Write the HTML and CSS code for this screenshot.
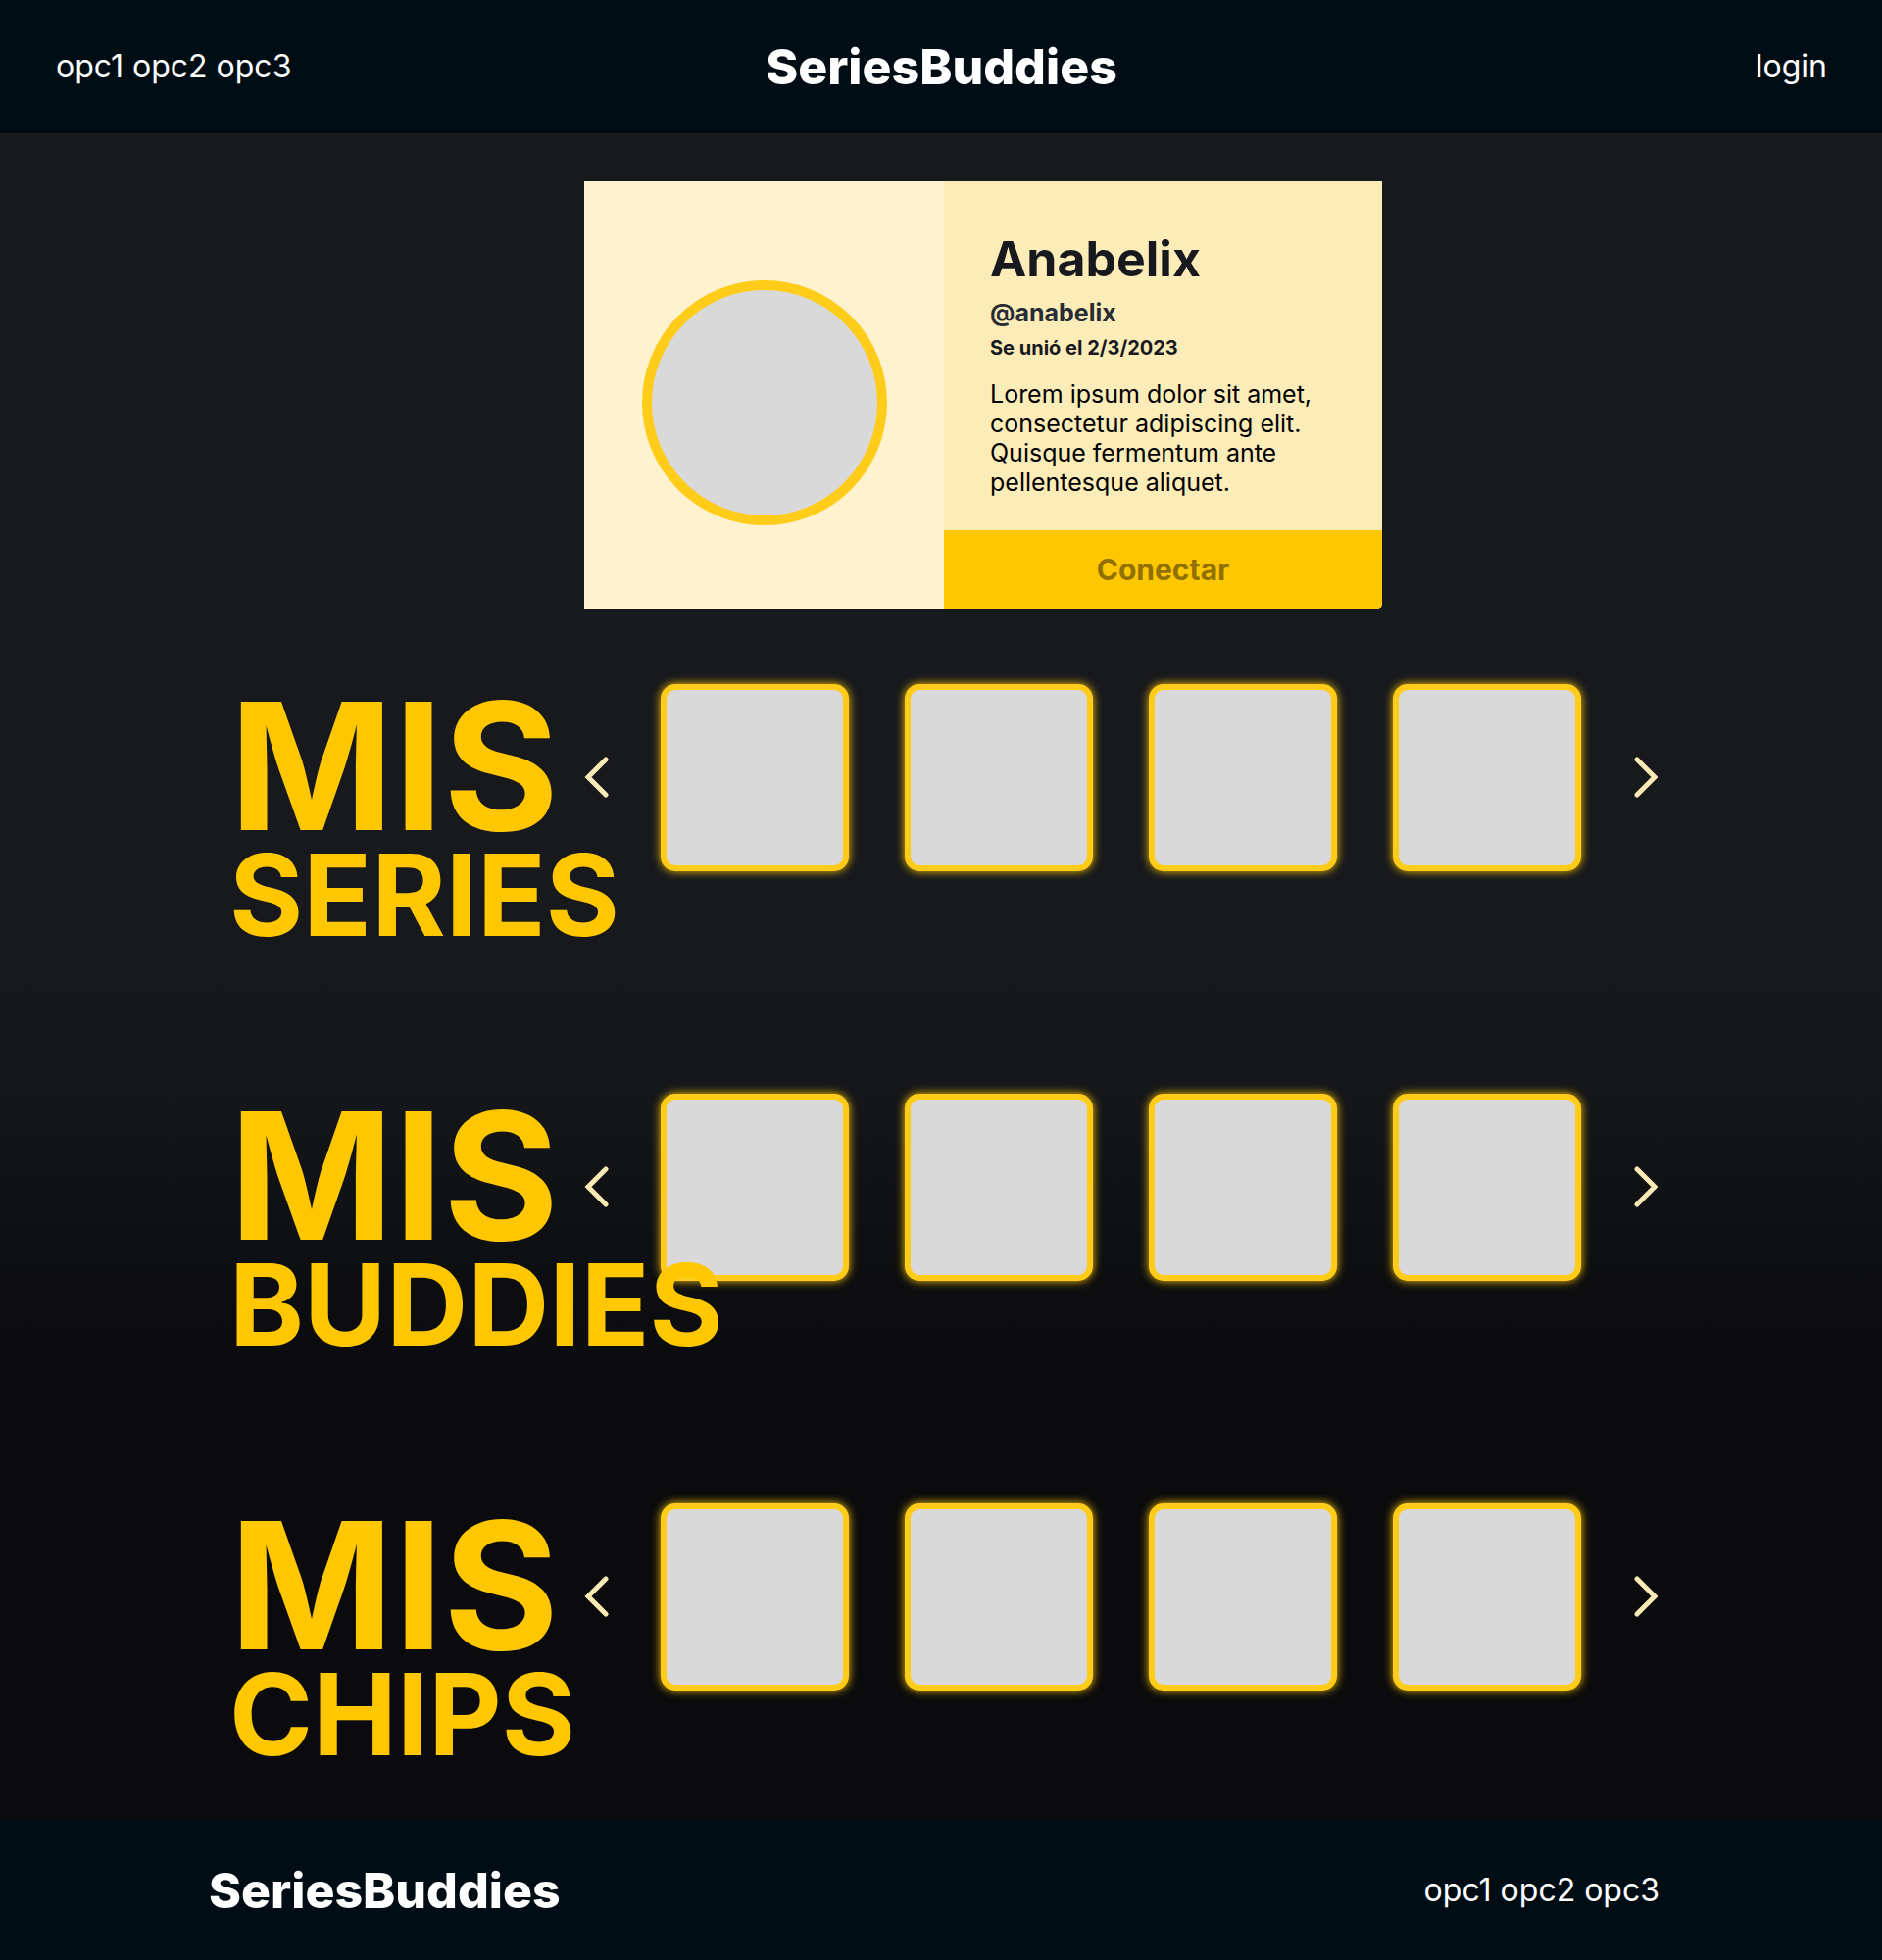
FILE: index.html
```html
<!DOCTYPE html>
<html lang="es">
<head>
<meta charset="utf-8">
<meta name="viewport" content="width=device-width, initial-scale=1">
<title>SeriesBuddies</title>
<link rel="stylesheet" href="styles.css">
</head>
<body>
<header class="site-header">
  <nav class="links"><a href="#">opc1</a> <a href="#">opc2</a> <a href="#">opc3</a></nav>
  <a class="logo" href="#">SeriesBuddies</a>
  <a class="login" href="#">login</a>
</header>
<main class="content">
  <section class="profile">
    <div class="profile-photo"><div class="avatar"></div></div>
    <div class="profile-info">
      <div class="profile-text">
        <h1 class="name">Anabelix</h1>
        <p class="handle">@anabelix</p>
        <p class="joined">Se unió el 2/3/2023</p>
        <p class="bio">Lorem ipsum dolor sit amet, consectetur adipiscing elit. Quisque fermentum ante pellentesque aliquet.</p>
      </div>
      <button class="connect" type="button">Conectar</button>
    </div>
  </section>
  <section class="shelf">
    <h2 class="shelf-title"><span class="mis">MIS</span><span class="topic">SERIES</span></h2>
    <div class="carousel">
      <button class="arrow" type="button" aria-label="Anterior"><svg width="25" height="43" viewBox="0 0 25 43"><path d="M22 3L4 21L22 39"/></svg></button>
      <ul class="tiles"><li class="tile"></li><li class="tile"></li><li class="tile"></li><li class="tile"></li></ul>
      <button class="arrow" type="button" aria-label="Siguiente"><svg width="25" height="43" viewBox="0 0 25 43"><path d="M4 3L22 21L4 39"/></svg></button>
    </div>
  </section>
  <section class="shelf">
    <h2 class="shelf-title"><span class="mis">MIS</span><span class="topic">BUDDIES</span></h2>
    <div class="carousel">
      <button class="arrow" type="button" aria-label="Anterior"><svg width="25" height="43" viewBox="0 0 25 43"><path d="M22 3L4 21L22 39"/></svg></button>
      <ul class="tiles"><li class="tile"></li><li class="tile"></li><li class="tile"></li><li class="tile"></li></ul>
      <button class="arrow" type="button" aria-label="Siguiente"><svg width="25" height="43" viewBox="0 0 25 43"><path d="M4 3L22 21L4 39"/></svg></button>
    </div>
  </section>
  <section class="shelf">
    <h2 class="shelf-title"><span class="mis">MIS</span><span class="topic">CHIPS</span></h2>
    <div class="carousel">
      <button class="arrow" type="button" aria-label="Anterior"><svg width="25" height="43" viewBox="0 0 25 43"><path d="M22 3L4 21L22 39"/></svg></button>
      <ul class="tiles"><li class="tile"></li><li class="tile"></li><li class="tile"></li><li class="tile"></li></ul>
      <button class="arrow" type="button" aria-label="Siguiente"><svg width="25" height="43" viewBox="0 0 25 43"><path d="M4 3L22 21L4 39"/></svg></button>
    </div>
  </section>
</main>
<footer class="site-footer">
  <a class="logo" href="#">SeriesBuddies</a>
  <nav class="links"><a href="#">opc1</a> <a href="#">opc2</a> <a href="#">opc3</a></nav>
</footer>
</body>
</html>
```
FILE: styles.css
```css
* {
  box-sizing: border-box;
  margin: 0;
  padding: 0;
}

body {
  font-family: Inter, "Liberation Sans", sans-serif;
  background: linear-gradient(#17191d 45%, #15171a 55%, #0d0e10 65%, #0b0b0d 71%);
}

a {
  color: inherit;
  text-decoration: none;
}

button {
  border: 0;
  font: inherit;
  cursor: pointer;
}

.site-header,
.site-footer {
  background: #000d15;
  color: #fff;
  font-size: 32px;
  line-height: 40px;
}

.site-header {
  display: grid;
  grid-template-columns: 1fr auto 1fr;
  align-items: center;
  padding: 38px 56px 38px 57px;
}

.logo {
  font-size: 50px;
  font-weight: 800;
  line-height: 60px;
}

.login {
  justify-self: end;
}

/* Main column: titles on the left, card and carousels on the right */
.content {
  display: flex;
  flex-direction: column;
  width: 100%;
  max-width: 1462px;
  margin: 0 auto;
  padding: 49px 0 59px;
}

.profile {
  display: grid;
  grid-template-columns: 367px 447px;
  margin: 0 0 77px 367px;
}

.profile-photo {
  display: flex;
  align-items: center;
  justify-content: center;
  padding-top: 16px;
  background: #fff3cf;
}

.avatar {
  width: 250px;
  height: 250px;
  border: 10px solid #ffcc1a;
  border-radius: 50%;
  background: #d9d9d9;
}

.profile-info {
  display: flex;
  flex-direction: column;
  background: #fcecb8;
  border-radius: 0 0 5px 0;
}

.profile-text {
  padding: 49px 48px 34px 47px;
  color: #18191e;
}

.name {
  font-size: 50px;
  font-weight: 700;
  line-height: 60px;
}

.handle {
  margin-top: 10px;
  font-size: 25px;
  font-weight: 700;
  line-height: 30px;
  color: #272c35;
}

.joined {
  margin-top: 9px;
  font-size: 20px;
  font-weight: 700;
  line-height: 24px;
}

.bio {
  margin-top: 20px;
  font-size: 25px;
  line-height: 30px;
  color: #000;
}

.connect {
  padding: 22px;
  border-radius: 0 0 5px 0;
  background: #ffc700;
  color: #8f7000;
  font-size: 30px;
  font-weight: 700;
  line-height: 36px;
}

.shelf {
  display: grid;
  grid-template-columns: 367px 1fr;
  align-items: start;
}

.shelf + .shelf {
  margin-top: 154px;
}

/* Long topics run over the first tile */
.shelf-title {
  position: relative;
  z-index: 1;
  padding-left: 5px;
  color: #ffc700;
  font-weight: 700;
  white-space: nowrap;
  pointer-events: none;
}

.mis,
.topic {
  display: block;
}

.mis {
  font-size: 180px;
  line-height: 168px;
}

.topic {
  font-size: 115px;
  line-height: 96px;
}

.carousel {
  display: flex;
  align-items: center;
  justify-content: space-between;
}

.arrow {
  background: none;
}

.arrow svg {
  display: block;
  fill: none;
  stroke: #fcebb7;
  stroke-width: 5;
  stroke-linecap: round;
}

.tiles {
  display: flex;
  gap: 57px;
  list-style: none;
}

.tile {
  width: 192px;
  height: 191px;
  border: 6px solid #ffcc1a;
  border-radius: 15px;
  background: #d9d9d9;
  box-shadow: 0 0 10px #ffc700;
}

.site-footer {
  display: flex;
  align-items: center;
  justify-content: space-between;
  padding: 42px 227px 41px 213px;
}
```
